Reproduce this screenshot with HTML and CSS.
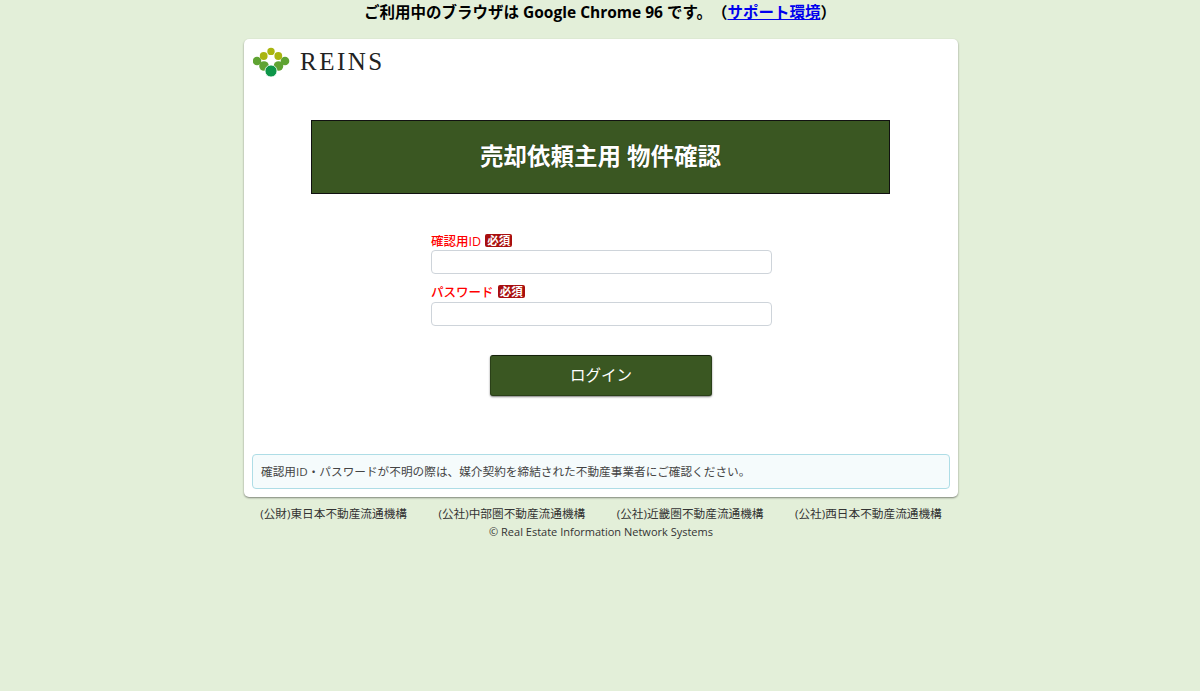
FILE: index.html
```html
<!DOCTYPE html>
<html lang="ja">
<head>
    <meta charset="UTF-8">
    <meta name="viewport" content="width=device-width, initial-scale=1.0">
    <title>売却依頼主用 物件確認</title>
    <link rel="stylesheet" href="styles.css">
</head>
<body>
    <p class="browser-note">ご利用中のブラウザは Google Chrome 96 です。（<a href="#">サポート環境</a>）</p>

    <div class="card">
        <div class="logo">
            <svg class="logo-mark" width="38" height="30" viewBox="0 0 38 30">
                <circle cx="18" cy="4.4" r="3.7" fill="#a9b510"/>
                <circle cx="10.7" cy="9" r="3.9" fill="#a9b510"/>
                <circle cx="25.3" cy="9" r="3.9" fill="#a9b510"/>
                <circle cx="4" cy="14" r="4.3" fill="#5fa332"/>
                <circle cx="32" cy="14" r="4.3" fill="#5fa332"/>
                <circle cx="11" cy="19" r="4.8" fill="#5fa332"/>
                <circle cx="25.5" cy="19" r="4.8" fill="#5fa332"/>
                <circle cx="18" cy="24" r="6" fill="#0d9649" stroke="#fff" stroke-width="0.8"/>
            </svg>
            <span class="logo-text">REINS</span>
        </div>

        <h1 class="title">売却依頼主用 物件確認</h1>

        <form class="login-form">
            <div class="form-group">
                <label for="confirm-id">確認用ID <span class="required">必須</span></label>
                <input type="text" id="confirm-id">
            </div>
            <div class="form-group">
                <label for="password">パスワード <span class="required">必須</span></label>
                <input type="password" id="password">
            </div>
            <button type="submit">ログイン</button>
        </form>

        <div class="notice">確認用ID・パスワードが不明の際は、媒介契約を締結された不動産事業者にご確認ください。</div>
    </div>

    <div class="footer">
        <ul class="org-list">
            <li>(公財)東日本不動産流通機構</li>
            <li>(公社)中部圏不動産流通機構</li>
            <li>(公社)近畿圏不動産流通機構</li>
            <li>(公社)西日本不動産流通機構</li>
        </ul>
        <p class="copyright">© Real Estate Information Network Systems</p>
    </div>
</body>
</html>
```

FILE: styles.css
```css
* {
    margin: 0;
    padding: 0;
    box-sizing: border-box;
}

body {
    min-height: 100vh;
    background-color: #e3efd9;
    color: #212529;
    font-family: "Open Sans", "Noto Sans CJK JP", sans-serif;
    font-size: 11.67px;
    text-spacing-trim: space-all;
}

.browser-note {
    height: 39px;
    padding-top: 1px;
    text-align: center;
    color: #000;
    font-size: 15.5px;
    font-weight: 700;
    line-height: 22px;
}

.browser-note a {
    color: #0000ee;
}

.card {
    width: 714px;
    height: 458px;
    margin-left: 244px;
    padding: 8px;
    background-color: #fff;
    border-radius: 5px;
    box-shadow: 0 1px 2px rgba(0, 0, 0, 0.45);
    display: flex;
    flex-direction: column;
}

.logo {
    height: 30px;
    margin-left: 1px;
    display: flex;
    align-items: center;
    gap: 9px;
}

.logo-text {
    color: #222;
    font-family: "Liberation Serif", serif;
    font-size: 25px;
    letter-spacing: 2.5px;
    line-height: 30px;
}

.title {
    width: 579px;
    height: 74px;
    margin: 43px 0 0 59px;
    background-color: #3a5722;
    border: 1px solid #111;
    color: #fff;
    font-size: 23.5px;
    font-weight: 700;
    line-height: 71px;
    text-align: center;
    text-shadow: 0 0 1px #14210a;
}

.login-form {
    width: 341px;
    margin: 39px 0 0 179px;
    display: flex;
    flex-direction: column;
}

.form-group {
    margin-bottom: 11px;
}

label {
    display: block;
    height: 17px;
    color: #f00;
    font-size: 12.5px;
    font-weight: 500;
    line-height: 17px;
}

.form-group + .form-group label {
    line-height: 15px;
}

.required {
    display: inline-block;
    height: 13px;
    margin-left: 1px;
    padding: 0 2px;
    background-color: #a80f0f;
    border-radius: 2px;
    color: #fff;
    font-size: 11.5px;
    font-weight: 700;
    line-height: 13px;
    vertical-align: 1px;
}

input {
    display: block;
    width: 100%;
    height: 24px;
    background-color: #fff;
    border: 1px solid #ced4da;
    border-radius: 4px;
}

button {
    width: 222px;
    height: 41px;
    margin: 18px 0 0 59px;
    padding-bottom: 3px;
    background-color: #3a5722;
    border: 1px solid #2a4018;
    border-top-color: #14210a;
    border-radius: 3px;
    box-shadow: 0 1px 2px rgba(0, 0, 0, 0.5);
    color: #fff;
    font-family: inherit;
    font-size: 15.5px;
}

.notice {
    height: 35px;
    margin-top: auto;
    padding: 0 8px;
    background-color: #f5fbfc;
    border: 1px solid #aedde6;
    border-radius: 4px;
    color: #444;
    line-height: 33px;
}

.footer {
    width: 714px;
    margin: 8px 0 0 244px;
    color: #333;
    text-align: center;
}

.org-list {
    display: flex;
    justify-content: center;
    gap: 31.5px;
    list-style: none;
    line-height: 18px;
}

.copyright {
    font-size: 11px;
    line-height: 18px;
}
```
